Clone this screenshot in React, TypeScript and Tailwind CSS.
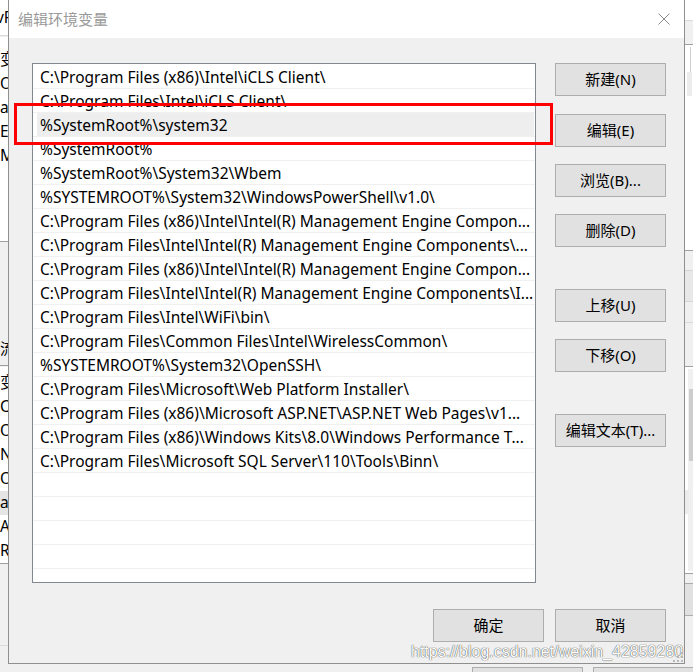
import React from "react";

const paths = [
  "C:\\Program Files (x86)\\Intel\\iCLS Client\\",
  "C:\\Program Files\\Intel\\iCLS Client\\",
  "%SystemRoot%\\system32",
  "%SystemRoot%",
  "%SystemRoot%\\System32\\Wbem",
  "%SYSTEMROOT%\\System32\\WindowsPowerShell\\v1.0\\",
  "C:\\Program Files (x86)\\Intel\\Intel(R) Management Engine Compon...",
  "C:\\Program Files\\Intel\\Intel(R) Management Engine Components\\...",
  "C:\\Program Files (x86)\\Intel\\Intel(R) Management Engine Compon...",
  "C:\\Program Files\\Intel\\Intel(R) Management Engine Components\\I...",
  "C:\\Program Files\\Intel\\WiFi\\bin\\",
  "C:\\Program Files\\Common Files\\Intel\\WirelessCommon\\",
  "%SYSTEMROOT%\\System32\\OpenSSH\\",
  "C:\\Program Files\\Microsoft\\Web Platform Installer\\",
  "C:\\Program Files (x86)\\Microsoft ASP.NET\\ASP.NET Web Pages\\v1...",
  "C:\\Program Files (x86)\\Windows Kits\\8.0\\Windows Performance T...",
  "C:\\Program Files\\Microsoft SQL Server\\110\\Tools\\Binn\\",
  "",
  "",
  "",
  "",
];

function Btn({ label, className = "" }: { label: string; className?: string }) {
  return (
    <div
      className={`w-[111px] h-[33px] shrink-0 border border-[#adadad] bg-[#e1e1e1] flex items-center justify-center text-[15px] text-black ${className}`}
    >
      {label}
    </div>
  );
}

// window behind the dialog, only thin strips of it show
function BackWindow() {
  const leftTop = ["变", "Or", "a", "E", "M"];
  const leftBottom = ["变", "Co", "Or", "NU", "OS", "ai", "A", "R", "P"];
  return (
    <>
      {/* left strip */}
      <div className="absolute left-0 top-0 w-[30px] h-[36px] bg-white border-b border-[#dadada] flex items-center text-[15.5px]">
        <span className="ml-[-4px]">vP</span>
      </div>
      <div className="absolute left-0 top-[37px] w-[30px] h-[205px] bg-white border-b border-[#a0a0a0] flex flex-col pt-[11px]">
        {leftTop.map((t, i) => (
          <div key={i} className="h-6 flex items-center text-[15.5px] whitespace-nowrap">
            {t}
          </div>
        ))}
      </div>
      <div className="absolute left-0 top-[331px] w-[30px] h-[35px] border-b border-[#a0a0a0] flex items-center text-[15px]">
        流
      </div>
      <div className="absolute left-0 top-[367px] w-[30px] h-[197px] bg-white border-b border-[#a0a0a0] overflow-hidden flex flex-col pt-[4px]">
        {leftBottom.map((t, i) => (
          <div
            key={i}
            className={`h-6 shrink-0 flex items-center text-[15.5px] whitespace-nowrap ${i === 5 ? "bg-[#e5e5e5]" : ""}`}
          >
            {t}
          </div>
        ))}
      </div>
      <div className="absolute left-0 top-[645px] w-[30px] border-t border-[#dadada]" />

      {/* right strip */}
      <div className="absolute right-0 top-0 w-[20px] h-[21px] bg-white border-b border-[#dadada]" />
      <div className="absolute right-0 top-[44px] w-[20px] h-[207px] bg-white border-t border-b border-[#a0a0a0]">
        <div className="absolute left-[17px] top-[2px] w-px h-[25px] bg-[#d0d0d0]" />
        <div className="absolute left-[14px] top-[27px] w-[5px] h-[24px] bg-[#ececec]" />
      </div>
      <div className="absolute right-0 top-[270px] w-[20px] h-[32px] bg-[#e8e8e8] border-t border-b border-[#d5d5d5]" />
      <div className="absolute right-0 top-[322px] w-[20px] border-t border-[#dadada]" />
      <div className="absolute right-0 top-[366px] w-[20px] h-[208px] bg-white border-t border-b border-[#a0a0a0]">
        <div className="absolute right-0 top-[2px] w-[5px] h-[202px] bg-[#f0f0f0]" />
        <div className="absolute right-0 top-[22px] w-[4px] h-[72px] bg-[#cdcdcd]" />
        <div className="absolute left-[12px] top-[123px] w-[4px] h-[24px] bg-[#ececec]" />
      </div>
      <div className="absolute right-[-20px] top-[583px] w-[36px] h-[33px] bg-[#e1e1e1] border border-[#adadad]" />

      {/* bottom strip */}
      <div className="absolute left-[472px] top-[667px] w-[111px] h-[20px] bg-[#e1e1e1] border border-[#adadad]" />
      <div className="absolute left-[593px] top-[667px] w-[111px] h-[20px] bg-[#e1e1e1] border border-[#adadad]" />
    </>
  );
}

export default function App() {
  return (
    <div className="relative w-[693px] h-[672px] overflow-hidden bg-[#f0f0f0] text-black font-['Noto_Sans','Noto_Sans_CJK_SC',sans-serif]">
      <BackWindow />

      {/* dialog */}
      <div className="absolute left-[8px] top-0 w-[677px] h-[664px] border-x border-b border-[#8f8f8f] flex flex-col bg-[#f0f0f0]">
        <div className="h-[38px] shrink-0 bg-white flex items-center justify-between pl-[9px] pr-[14px]">
          <span className="text-[15px] text-[#9a9a9a]">编辑环境变量</span>
          <svg width="12" height="12" viewBox="0 0 12 12" className="text-[#8a8a8a]">
            <path d="M0.5 0.5 L11.5 11.5 M11.5 0.5 L0.5 11.5" stroke="currentColor" strokeWidth="1" />
          </svg>
        </div>

        <div className="flex-1 flex flex-col pl-[23px] pr-[18px] pt-[25px]">
          <div className="flex">
            <div className="w-[504px] h-[520px] shrink-0 border border-[#828790] bg-white pt-px overflow-hidden">
              {paths.map((p, i) => (
                <div key={i} className="h-6 border-b border-[#f0f0f0] flex">
                  <div
                    className={`flex-1 ml-[4px] mr-px pl-[3px] pt-[2px] flex items-center text-[15.5px] whitespace-nowrap overflow-hidden ${i === 2 ? "bg-[#eeeeee]" : ""}`}
                  >
                    {p}
                  </div>
                </div>
              ))}
            </div>

            <div className="ml-[19px] flex flex-col">
              <Btn label="新建(N)" />
              <Btn label="编辑(E)" className="mt-[18px]" />
              <Btn label="浏览(B)..." className="mt-[17px]" />
              <Btn label="删除(D)" className="mt-[17px]" />
              <Btn label="上移(U)" className="mt-[42px]" />
              <Btn label="下移(O)" className="mt-[17px]" />
              <Btn label="编辑文本(T)..." className="mt-[42px]" />
            </div>
          </div>

          <div className="mt-[26px] flex justify-end gap-[11px]">
            <Btn label="确定" />
            <Btn label="取消" />
          </div>
        </div>
      </div>

      {/* red highlight box */}
      <div className="absolute left-[14px] top-[103px] w-[539px] h-[42px] border-[3px] border-[#ff0000]" />

      {/* watermark */}
      <div className="absolute left-[411px] top-[642px] text-[16px] leading-[20px] text-white font-['Liberation_Sans',sans-serif] [text-shadow:0_0_1px_rgba(0,0,0,0.7),0_0_1px_rgba(0,0,0,0.5)]">
        https://blog.csdn.net/weixin_42859280
      </div>
      <svg className="absolute left-[673px] top-[652px]" width="10" height="10" viewBox="0 0 10 10">
        <rect x="8" y="0" width="2" height="2" fill="#b8b8b8" />
        <rect x="4" y="4" width="2" height="2" fill="#b8b8b8" />
        <rect x="8" y="4" width="2" height="2" fill="#b8b8b8" />
        <rect x="0" y="8" width="2" height="2" fill="#b8b8b8" />
        <rect x="4" y="8" width="2" height="2" fill="#b8b8b8" />
        <rect x="8" y="8" width="2" height="2" fill="#b8b8b8" />
      </svg>
    </div>
  );
}
